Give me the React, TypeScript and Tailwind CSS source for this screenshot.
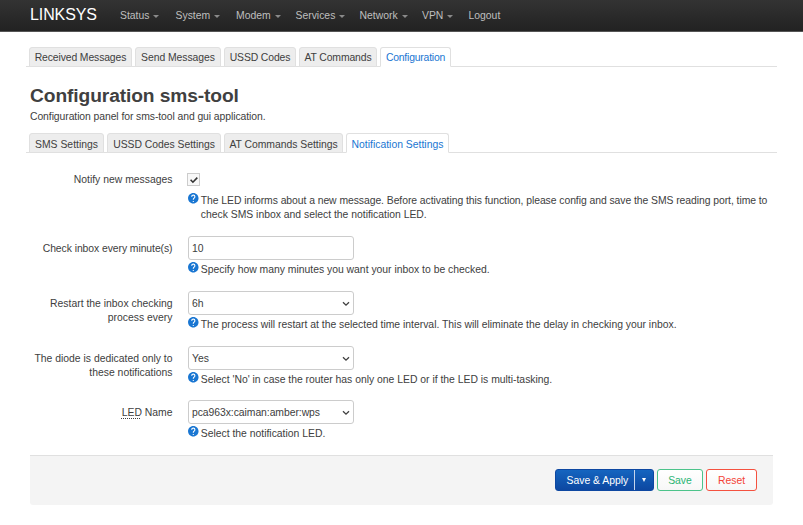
import type { ReactNode } from 'react';

const menu = [
  { label: 'Status', x: 'w-[55.5px]' },
  { label: 'System', x: 'w-[60.5px]' },
  { label: 'Modem', x: 'w-[59.5px]' },
  { label: 'Services', x: 'w-[64px]' },
  { label: 'Network', x: 'w-[62.5px]' },
  { label: 'VPN', x: 'w-[46.5px]' },
];

const mainTabs = [
  { label: 'Received Messages', w: 'w-[103px] tracking-[-0.12px]' },
  { label: 'Send Messages', w: 'w-[86px] tracking-[-0.05px]' },
  { label: 'USSD Codes', w: 'w-[72px] tracking-[-0.12px]' },
  { label: 'AT Commands', w: 'w-[78px] tracking-[-0.12px]' },
  { label: 'Configuration', w: 'w-[71px] tracking-[-0.2px]' },
];

const subTabs = [
  { label: 'SMS Settings', w: 'w-[75px]' },
  { label: 'USSD Codes Settings', w: 'w-[114px] tracking-[-0.03px]' },
  { label: 'AT Commands Settings', w: 'w-[119px] tracking-[-0.03px]' },
  { label: 'Notification Settings', w: 'w-[103px]' },
];

function Tabs({ items, pad }: { items: { label: string; w: string }[]; pad: string }) {
  return (
    <ul className="ml-[26px] flex h-[20px] w-[751px] gap-[3px] border-b border-[#e0e0e0] pl-[3px]">
      {items.map((tab, i) => (
        <li
          key={tab.label}
          className={`${tab.w} ${pad} flex h-[20px] shrink-0 justify-center rounded-t-[3px] border leading-[15px] whitespace-nowrap ${
            i === items.length - 1
              ? 'border-[#e0e0e0] border-b-white bg-white text-[#1976d2]'
              : 'border-[#e0e0e0] bg-[#ededed]'
          }`}
        >
          {tab.label}
        </li>
      ))}
    </ul>
  );
}

function Help({ children }: { children: ReactNode }) {
  return (
    <div className="flex">
      <svg viewBox="0 0 24 24" className="mt-[-2.2px] -ml-px h-[12.6px] w-[12.6px] shrink-0" fill="#1976d2">
        <path d="M12 2C6.48 2 2 6.48 2 12s4.48 10 10 10 10-4.48 10-10S17.52 2 12 2zm1 17h-2v-2h2v2zm2.07-7.75l-.9.92C13.45 12.9 13 13.5 13 15h-2v-.5c0-1.1.45-2.1 1.17-2.83l1.24-1.26c.37-.36.59-.86.59-1.41 0-1.1-.9-2-2-2s-2 .9-2 2H8c0-2.21 1.79-4 4-4s4 1.79 4 4c0 .88-.36 1.68-.93 2.25z" />
      </svg>
      <div className="ml-[1.2px] leading-[14.4px] tracking-[-0.01px]">{children}</div>
    </div>
  );
}

function Row({ label, h, children }: { label: ReactNode; h: string; children: ReactNode }) {
  return (
    <div className={`flex ${h}`}>
      <div className="w-[172.5px] shrink-0 pt-[6px] text-right leading-[14.4px]">{label}</div>
      <div className="ml-[15.5px] w-[590px]">{children}</div>
    </div>
  );
}

function Field({ value, select = true }: { value: string; select?: boolean }) {
  return (
    <div className="mb-[3px] flex h-[24px] w-[166px] items-center justify-between rounded-[3px] border border-[#ccc] bg-white pr-[3.5px] pl-[3px]">
      <span className="pt-px tracking-[-0.06px]">{value}</span>
      {select && (
        <svg viewBox="0 0 8 6" className="mt-px h-[6px] w-[8px]" fill="none" stroke="#404040" strokeWidth="1.3">
          <path d="M1 1.2l3 3 3-3" />
        </svg>
      )}
    </div>
  );
}

export default function App() {
  return (
    <div className="h-[525px] w-[803px] overflow-hidden bg-white font-['Liberation_Sans',Arial,sans-serif] text-[10.4px] text-[#404040]">
      <header className="flex h-[32px] items-center border-b border-[#555] bg-gradient-to-b from-[#333] to-[#222] text-[#bfbfbf]">
        <div className="ml-[30px] w-[90px] pb-[2px] text-[16px] leading-[20px] tracking-[-0.1px] text-white">LINKSYS</div>
        <nav className="flex leading-[14px]">
          {menu.map((m) => (
            <div key={m.label} className={`${m.x} flex items-center`}>
              {m.label}
              <span className="mt-px ml-[4px] h-0 w-0 border-x-[3px] border-t-[3px] border-x-transparent border-t-[#8a8a8a]" />
            </div>
          ))}
          <div>Logout</div>
        </nav>
      </header>
      <main>
        <div className="h-[15px]" />
        <Tabs items={mainTabs} pad="pt-[2px]" />
        <h2 className="mt-[15px] ml-[30px] h-[28px] text-[19.2px] leading-[27px] font-bold tracking-[-0.1px]">Configuration sms-tool</h2>
        <p className="ml-[30px] h-[23px] leading-[14.4px] tracking-[-0.08px]">Configuration panel for sms-tool and gui application.</p>
        <Tabs items={subTabs} pad="pt-[3px]" />
        <form className="mt-[20px]">
          <Row label={<div className="mt-[-6px]">Notify new messages</div>} h="h-[63px]">
            <div className="-ml-px mb-[8px] flex h-[13px] w-[13px] items-center justify-center border border-[#ccc] bg-[#f8f8f8]">
              <svg viewBox="0 0 10 10" className="h-[10px] w-[10px]" fill="none" stroke="#333" strokeWidth="1.6">
                <path d="M1.6 4.8l2.3 2.4 4.4-4.6" />
              </svg>
            </div>
            <Help>
              <span className="tracking-[-0.062px]">
                The LED informs about a new message. Before activating this function, please config and save the SMS reading port, time to
              </span>
              <br />
              check SMS inbox and select the notification LED.
            </Help>
          </Row>
          <Row label={<span className="tracking-[-0.07px]">Check inbox every minute(s)</span>} h="h-[55px]">
            <Field value="10" select={false} />
            <Help>Specify how many minutes you want your inbox to be checked.</Help>
          </Row>
          <Row label={<>Restart the inbox checking<br />process every</>} h="h-[55px]">
            <Field value="6h" />
            <Help>The process will restart at the selected time interval. This will eliminate the delay in checking your inbox.</Help>
          </Row>
          <Row label={<>The diode is dedicated only to<br />these notifications</>} h="h-[54px]">
            <Field value="Yes" />
            <Help>Select 'No' in case the router has only one LED or if the LED is multi-tasking.</Help>
          </Row>
          <Row
            label={<><span className="underline decoration-dotted decoration-1 underline-offset-2">LED</span> Name</>}
            h="h-[55px]"
          >
            <Field value="pca963x:caiman:amber:wps" />
            <Help>Select the notification LED.</Help>
          </Row>
          <div className="ml-[30px] flex h-[50px] w-[743px] justify-end gap-[3px] rounded-b-[3px] border-t border-[#e0e0e0] bg-[#f4f4f4] pt-[13px] pr-[16px]">
            <div className="flex h-[22px] w-[99px] rounded-[3px] border border-[#0d47a1] bg-gradient-to-b from-[#1565c0] to-[#0d47a1] leading-[21px] text-white">
              <span className="w-[79px] border-r border-[#c5d5ec] pl-[10.5px]">Save &amp; Apply</span>
              <span className="flex flex-1 items-center justify-center">
                <span className="h-0 w-0 border-x-[2px] border-t-[4px] border-x-transparent border-t-white" />
              </span>
            </div>
            <div className="h-[22px] w-[46px] rounded-[3px] border border-[#4cc38a] bg-gradient-to-b from-white to-[#f7f7f7] text-center leading-[21px] text-[#2bb573]">
              Save
            </div>
            <div className="h-[22px] w-[51px] rounded-[3px] border border-[#f4513f] bg-gradient-to-b from-white to-[#f7f7f7] text-center leading-[21px] text-[#f44336]">
              Reset
            </div>
          </div>
        </form>
      </main>
    </div>
  );
}
